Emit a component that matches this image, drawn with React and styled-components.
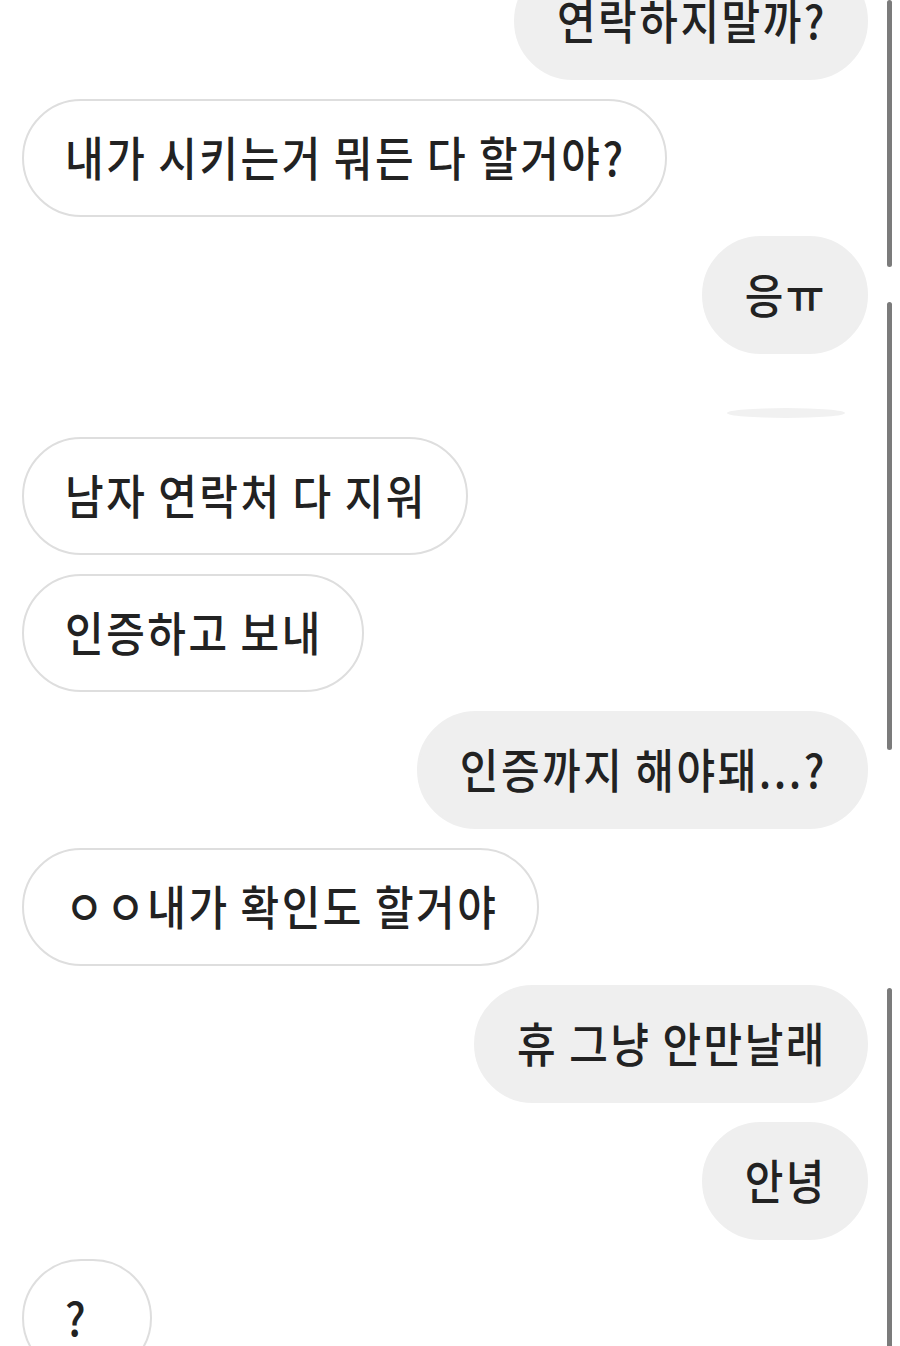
import styled, { createGlobalStyle } from 'styled-components'

const GlobalStyle = createGlobalStyle`
  html, body {
    margin: 0;
    padding: 0;
    background: #ffffff;
    overflow: hidden;
  }

  #root {
    height: 1346px;
  }
`

const Screen = styled.div`
  display: flex;
  height: 1346px;
  overflow: hidden;
  background: #ffffff;
  font-family: "Noto Sans CJK KR", "Noto Sans", sans-serif;
`

const Thread = styled.div`
  flex: 1;
  display: flex;
  flex-direction: column;
  gap: 19px;
  margin-top: -38px;
  padding: 0 19px 0 22px;
`

const Bubble = styled.div`
  flex: none;
  align-self: ${p => (p.mine ? 'flex-end' : 'flex-start')};
  box-sizing: border-box;
  height: 118px;
  min-width: 130px;
  display: flex;
  align-items: center;
  padding: 0 39px 0 41px;
  border-radius: 59px;
  background: ${p => (p.mine ? '#efefef' : '#ffffff')};
  border: 2px solid ${p => (p.mine ? '#efefef' : '#dedede')};
  color: #222222;
  font-size: 42px;
  font-weight: 500;
  letter-spacing: 2.5px;
  word-spacing: -1px;
  white-space: nowrap;
`

const Text = styled.span`
  display: inline-block;
  transform: translateY(-3px) scaleY(1.1);
`

const Remnant = styled.div`
  flex: none;
  height: 45px;
  display: flex;
  align-items: flex-end;
  justify-content: flex-end;
  padding-right: 23px;

  span {
    width: 118px;
    height: 10px;
    border-radius: 50%;
    background: #f1f1f1;
  }
`

const Rail = styled.div`
  width: 5px;
  margin-right: 8px;
  display: flex;
  flex-direction: column;
`

const Segment = styled.div`
  flex: none;
  height: ${p => p.size}px;
  border-radius: 3px;
  background: ${p => (p.gap ? 'transparent' : '#7b7b7b')};
`

const messages = [
  { mine: true, text: '연락하지말까?' },
  { mine: false, text: '내가 시키는거 뭐든 다 할거야?' },
  { mine: true, text: '응ㅠ' },
  { remnant: true },
  { mine: false, text: '남자 연락처 다 지워' },
  { mine: false, text: '인증하고 보내' },
  { mine: true, text: '인증까지 해야돼...?' },
  { mine: false, text: 'ㅇㅇ내가 확인도 할거야' },
  { mine: true, text: '휴 그냥 안만날래' },
  { mine: true, text: '안녕' },
  { mine: false, text: '?' },
]

const App = () => {
  return (
    <>
      <GlobalStyle />
      <Screen>
        <Thread>
          {messages.map((m, i) =>
            m.remnant ? (
              <Remnant key={i}><span /></Remnant>
            ) : (
              <Bubble key={i} mine={m.mine}>
                <Text>{m.text}</Text>
              </Bubble>
            )
          )}
        </Thread>
        <Rail>
          <Segment size={267} />
          <Segment size={35} gap />
          <Segment size={448} />
          <Segment size={238} gap />
          <Segment size={400} />
        </Rail>
      </Screen>
    </>
  )
}

export default App
